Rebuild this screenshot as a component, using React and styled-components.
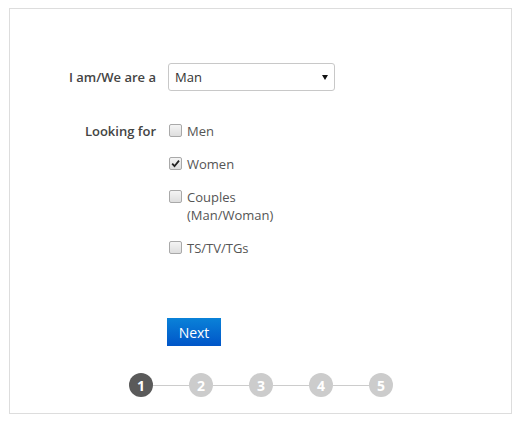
import React from "react";
import styled, { createGlobalStyle } from "styled-components";

const Global = createGlobalStyle`
  html, body { margin: 0; padding: 0; background: #fff; }
  body { font-family: "Open Sans", "Liberation Sans", Arial, sans-serif; }
  * { box-sizing: border-box; }
`;

const Panel = styled.div`
  margin: 8px 0 0 9px;
  width: 503px;
  height: 406px;
  border: 1px solid #dddddd;
  padding: 54px 0 0 0;
  display: flex;
  flex-direction: column;
`;

const Row = styled.div`
  display: grid;
  grid-template-columns: 146px 1fr;
  column-gap: 12px;
  align-items: ${(p) => (p.$top ? "start" : "center")};
  margin-top: ${(p) => p.$mt || 0}px;
`;

const Label = styled.div`
  text-align: right;
  font-size: 13px;
  font-weight: 600;
  color: #444;
  line-height: 18px;
`;

const Select = styled.div`
  width: 167px;
  height: 28px;
  border: 1px solid #c8c8c8;
  border-radius: 3px;
  background: #fff;
  display: flex;
  align-items: center;
  justify-content: space-between;
  padding: 0 6px 0 6px;
  font-size: 13px;
  color: #333;
`;

const Options = styled.div`
  display: flex;
  flex-direction: column;
  gap: 15px;
`;

const Option = styled.label`
  display: flex;
  align-items: flex-start;
  gap: 5px;
  font-size: 13px;
  line-height: 18px;
  color: #555;
  margin-left: 1px;
`;

const Box = styled.span`
  flex: none;
  width: 13px;
  height: 13px;
  margin-top: 2px;
  border: 1px solid #a9a9a9;
  border-radius: 2px;
  background: linear-gradient(#f4f4f4, #dedede);
  display: flex;
  align-items: center;
  justify-content: center;
`;

const Button = styled.button`
  margin: 61px 0 0 157px;
  width: 54px;
  height: 28px;
  border: none;
  padding: 0;
  background: linear-gradient(#0a82d8, #0055c8);
  color: #fff;
  font-family: inherit;
  font-size: 14px;
  align-self: flex-start;
`;

const Steps = styled.div`
  margin: 27px 0 0 119px;
  display: flex;
  align-items: center;
`;

const Step = styled.div`
  width: 24px;
  height: 24px;
  border-radius: 50%;
  background: ${(p) => (p.$active ? "#5a5a5a" : "#cccccc")};
  color: #fff;
  font-size: 14px;
  font-weight: 700;
  display: flex;
  align-items: center;
  justify-content: center;
  flex: none;
`;

const Line = styled.div`
  width: 36px;
  height: 1px;
  background: #cccccc;
`;

const Check = () => (
  <svg width="9" height="9" viewBox="0 0 9 9">
    <path d="M1.2 4.6 L3.5 7.2 L8 1.6" fill="none" stroke="#222" strokeWidth="1.8" />
  </svg>
);

const Arrow = () => (
  <svg width="6" height="5" viewBox="0 0 6 5">
    <path d="M0 0 H6 L3 5 Z" fill="#111" />
  </svg>
);

const options = [
  { label: ["Men"], checked: false },
  { label: ["Women"], checked: true },
  { label: ["Couples", "(Man/Woman)"], checked: false },
  { label: ["TS/TV/TGs"], checked: false },
];

export default function App() {
  return (
    <>
      <Global />
      <Panel>
        <Row>
          <Label>I am/We are a</Label>
          <Select>
            <span>Man</span>
            <Arrow />
          </Select>
        </Row>
        <Row $top $mt={31}>
          <Label>Looking for</Label>
          <Options>
            {options.map((o) => (
              <Option key={o.label[0]}>
                <Box>{o.checked && <Check />}</Box>
                <span>
                  {o.label.map((l, i) => (
                    <div key={i}>{l}</div>
                  ))}
                </span>
              </Option>
            ))}
          </Options>
        </Row>
        <Button>Next</Button>
        <Steps>
          {[1, 2, 3, 4, 5].map((n) => (
            <React.Fragment key={n}>
              {n > 1 && <Line />}
              <Step $active={n === 1}>{n}</Step>
            </React.Fragment>
          ))}
        </Steps>
      </Panel>
    </>
  );
}
